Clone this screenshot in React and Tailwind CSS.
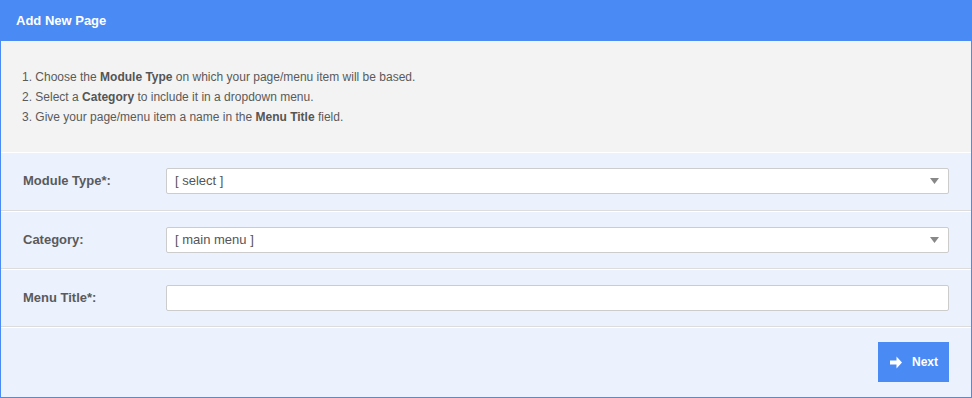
export default function App() {
  const font = { fontFamily: '"Liberation Sans", Arial, sans-serif' };
  const Caret = () => (
    <svg width="9" height="6" viewBox="0 0 9 6" className="shrink-0">
      <path d="M0 0h9L4.5 6z" fill="#888" />
    </svg>
  );
  return (
    <div className="w-[972px] h-[398px] border border-[#4a8af4] bg-[#ebf1fd] flex flex-col" style={font}>
      <div className="h-[40px] shrink-0 bg-[#4a8af4] flex items-center pl-[15px] text-white font-bold text-[13px]">
        Add New Page
      </div>
      <div className="h-[112px] shrink-0 bg-[#f3f3f3] border-b border-white pl-[21px] flex flex-col justify-center text-[12px] leading-[20px] text-[#5a5a5a]">
        <div>1. Choose the <b className="text-[#555]">Module Type</b> on which your page/menu item will be based.</div>
        <div>2. Select a <b className="text-[#555]">Category</b> to include it in a dropdown menu.</div>
        <div>3. Give your page/menu item a name in the <b className="text-[#555]">Menu Title</b> field.</div>
      </div>
      <div className="h-[58px] shrink-0 border-b border-[#dcdcdc] flex items-center pl-[22px] pr-[22px] pb-[1px]">
        <div className="w-[143px] shrink-0 text-[13px] font-bold text-[#5a5a5a]">Module Type*:</div>
        <div className="flex-1 h-[26px] bg-white border border-[#cccccc] rounded-[2px] flex items-center justify-between pl-[8px] pr-[9px] text-[13px] text-[#555]">
          <span>[ select ]</span>
          <Caret />
        </div>
      </div>
      <div className="h-[58px] shrink-0 border-t border-white border-b border-b-[#dcdcdc] flex items-center pl-[22px] pr-[22px] pb-[1px]">
        <div className="w-[143px] shrink-0 text-[13px] font-bold text-[#5a5a5a]">Category:</div>
        <div className="flex-1 h-[26px] bg-white border border-[#cccccc] rounded-[2px] flex items-center justify-between pl-[8px] pr-[9px] text-[13px] text-[#555]">
          <span>[ main menu ]</span>
          <Caret />
        </div>
      </div>
      <div className="h-[58px] shrink-0 border-t border-white border-b border-b-[#dcdcdc] flex items-center pl-[22px] pr-[22px] pb-[1px]">
        <div className="w-[143px] shrink-0 text-[13px] font-bold text-[#5a5a5a]">Menu Title*:</div>
        <div className="flex-1 h-[26px] bg-white border border-[#cccccc] rounded-[2px]" />
      </div>
      <div className="flex-1 border-t border-white flex items-center justify-end pr-[22px] pb-[1px]">
        <button className="w-[71px] h-[40px] bg-[#4a8af4] flex items-center pl-[12px] text-white text-[12px] font-bold">
          <svg width="12" height="13" viewBox="0 0 12 13" className="shrink-0">
            <path d="M0 4.5h6.5V0.5l5.5 6-5.5 6V8.5H0z" fill="#fff" />
          </svg>
          <span className="ml-[10px]">Next</span>
        </button>
      </div>
    </div>
  );
}
